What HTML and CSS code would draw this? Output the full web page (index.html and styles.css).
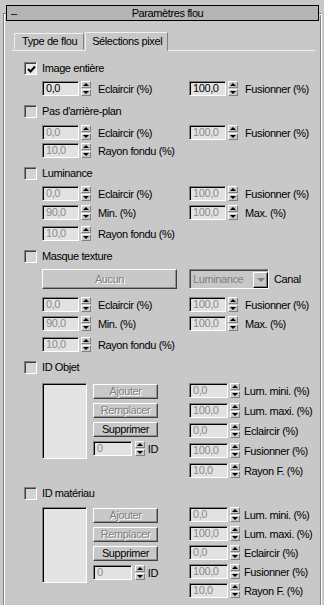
FILE: index.html
```html
<!DOCTYPE html>
<html lang="fr">
<head>
    <meta charset="UTF-8">
    <title>Paramètres flou</title>
    <link rel="stylesheet" href="styles.css">
</head>
<body>

    <div class="rollout">
        <div class="rollout-title">
            <span class="toggle">–</span>
            <span class="title">Paramètres flou</span>
        </div>

        <div class="tabs">
            <div class="tab">Type de flou</div>
            <div class="tab active">Sélections pixel</div>
        </div>

        <!-- Image entière -->
        <div class="section first">
            <label class="check"><span class="box checked"><svg width="9" height="9" viewBox="0 0 9 9"><path d="M1 4 L3.5 6.5 L8 1.5" fill="none" stroke="#000" stroke-width="2"/></svg></span>Image entière</label>
            <div class="fields">
                <div class="spin"><span class="edit">0,0</span><span class="arrows"><i class="up"></i><i class="down"></i></span><span class="lbl">Eclaircir (%)</span></div>
                <div class="spin"><span class="edit">100,0</span><span class="arrows"><i class="up"></i><i class="down"></i></span><span class="lbl">Fusionner (%)</span></div>
            </div>
        </div>

        <!-- Pas d'arrière-plan -->
        <div class="section">
            <label class="check"><span class="box"></span>Pas d'arrière-plan</label>
            <div class="fields tight">
                <div class="spin"><span class="edit off">0,0</span><span class="arrows"><i class="up"></i><i class="down"></i></span><span class="lbl">Eclaircir (%)</span></div>
                <div class="spin"><span class="edit off">100,0</span><span class="arrows"><i class="up"></i><i class="down"></i></span><span class="lbl">Fusionner (%)</span></div>
                <div class="spin"><span class="edit off">10,0</span><span class="arrows"><i class="up"></i><i class="down"></i></span><span class="lbl">Rayon fondu (%)</span></div>
            </div>
        </div>

        <!-- Luminance -->
        <div class="section">
            <label class="check"><span class="box"></span>Luminance</label>
            <div class="fields">
                <div class="spin"><span class="edit off">0,0</span><span class="arrows"><i class="up"></i><i class="down"></i></span><span class="lbl">Eclaircir (%)</span></div>
                <div class="spin"><span class="edit off">100,0</span><span class="arrows"><i class="up"></i><i class="down"></i></span><span class="lbl">Fusionner (%)</span></div>
                <div class="spin"><span class="edit off">90,0</span><span class="arrows"><i class="up"></i><i class="down"></i></span><span class="lbl">Min. (%)</span></div>
                <div class="spin"><span class="edit off">100,0</span><span class="arrows"><i class="up"></i><i class="down"></i></span><span class="lbl">Max. (%)</span></div>
                <div class="spin lower"><span class="edit off">10,0</span><span class="arrows"><i class="up"></i><i class="down"></i></span><span class="lbl">Rayon fondu (%)</span></div>
            </div>
        </div>

        <!-- Masque texture -->
        <div class="section">
            <label class="check"><span class="box"></span>Masque texture</label>
            <div class="map-row">
                <div class="btn big off">Aucun</div>
                <div class="combo"><span class="combo-text">Luminance</span><span class="combo-arrow"></span></div>
                <span class="lbl">Canal</span>
            </div>
            <div class="fields">
                <div class="spin"><span class="edit off">0,0</span><span class="arrows"><i class="up"></i><i class="down"></i></span><span class="lbl">Eclaircir (%)</span></div>
                <div class="spin"><span class="edit off">100,0</span><span class="arrows"><i class="up"></i><i class="down"></i></span><span class="lbl">Fusionner (%)</span></div>
                <div class="spin"><span class="edit off">90,0</span><span class="arrows"><i class="up"></i><i class="down"></i></span><span class="lbl">Min. (%)</span></div>
                <div class="spin"><span class="edit off">100,0</span><span class="arrows"><i class="up"></i><i class="down"></i></span><span class="lbl">Max. (%)</span></div>
                <div class="spin lower"><span class="edit off">10,0</span><span class="arrows"><i class="up"></i><i class="down"></i></span><span class="lbl">Rayon fondu (%)</span></div>
            </div>
        </div>

        <!-- ID Objet -->
        <div class="section">
            <label class="check"><span class="box"></span>ID Objet</label>
            <div class="id-block">
                <div class="listbox"></div>
                <div class="id-buttons">
                    <div class="btn off">Ajouter</div>
                    <div class="btn off">Remplacer</div>
                    <div class="btn">Supprimer</div>
                    <div class="spin"><span class="edit off wide">0</span><span class="arrows"><i class="up"></i><i class="down"></i></span><span class="lbl short">ID</span></div>
                </div>
                <div class="id-values">
                    <div class="spin"><span class="edit off">0,0</span><span class="arrows"><i class="up"></i><i class="down"></i></span><span class="lbl short">Lum. mini. (%)</span></div>
                    <div class="spin"><span class="edit off">100,0</span><span class="arrows"><i class="up"></i><i class="down"></i></span><span class="lbl short">Lum. maxi. (%)</span></div>
                    <div class="spin"><span class="edit off">0,0</span><span class="arrows"><i class="up"></i><i class="down"></i></span><span class="lbl short">Eclaircir (%)</span></div>
                    <div class="spin"><span class="edit off">100,0</span><span class="arrows"><i class="up"></i><i class="down"></i></span><span class="lbl short">Fusionner (%)</span></div>
                    <div class="spin"><span class="edit off">10,0</span><span class="arrows"><i class="up"></i><i class="down"></i></span><span class="lbl short">Rayon F. (%)</span></div>
                </div>
            </div>
        </div>

        <!-- ID matériau -->
        <div class="section">
            <label class="check"><span class="box"></span>ID matériau</label>
            <div class="id-block compact">
                <div class="listbox"></div>
                <div class="id-buttons">
                    <div class="btn off">Ajouter</div>
                    <div class="btn off">Remplacer</div>
                    <div class="btn">Supprimer</div>
                    <div class="spin"><span class="edit off wide">0</span><span class="arrows"><i class="up"></i><i class="down"></i></span><span class="lbl short">ID</span></div>
                </div>
                <div class="id-values">
                    <div class="spin"><span class="edit off">0,0</span><span class="arrows"><i class="up"></i><i class="down"></i></span><span class="lbl short">Lum. mini. (%)</span></div>
                    <div class="spin"><span class="edit off">100,0</span><span class="arrows"><i class="up"></i><i class="down"></i></span><span class="lbl short">Lum. maxi. (%)</span></div>
                    <div class="spin"><span class="edit off">0,0</span><span class="arrows"><i class="up"></i><i class="down"></i></span><span class="lbl short">Eclaircir (%)</span></div>
                    <div class="spin"><span class="edit off">100,0</span><span class="arrows"><i class="up"></i><i class="down"></i></span><span class="lbl short">Fusionner (%)</span></div>
                    <div class="spin"><span class="edit off">10,0</span><span class="arrows"><i class="up"></i><i class="down"></i></span><span class="lbl short">Rayon F. (%)</span></div>
                </div>
            </div>
        </div>
    </div>

</body>
</html>
```

FILE: styles.css
```css
body {
    margin: 0;
    width: 324px;
    height: 605px;
    overflow: hidden;
    background-color: #c8c8c8;
    font-family: "Liberation Sans", Arial, sans-serif;
    font-size: 11px;
    letter-spacing: -0.4px;
    color: #000;
}

/* rollout frame */
.rollout {
    margin: 13px 2px 0 3px;
    min-height: 620px;
    border: 1px solid;
    border-color: #808080 #fff transparent #808080;
    box-shadow: inset 1px 1px #fff, inset -1px 0 #808080;
}

.rollout-title {
    display: flex;
    align-items: center;
    height: 16px;
    box-sizing: border-box;
    margin: -9px 2px 0 2px;
    border: 1px solid #000;
    background-color: #b4b4b4;
}

.toggle {
    width: 6px;
    padding-left: 4px;
    line-height: 12px;
}

.title {
    flex: 1;
    text-align: center;
    line-height: 14px;
}

/* tabs */
.tabs {
    display: flex;
    align-items: flex-end;
    height: 19px;
    margin: 10px 6px 0 8px;
    border-bottom: 1px solid #f0f0f0;
}

.tab {
    height: 17px;
    box-sizing: border-box;
    padding: 0 6px 0 7px;
    border: 1px solid;
    border-color: #f0f0f0 #808080 transparent #f0f0f0;
    line-height: 15px;
}

.tab:first-child { margin-left: 2px; }

.tab.active {
    height: 19px;
    margin-bottom: -1px;
    margin-left: 1px;
    padding: 0 5px 0 6px;
    background-color: #c8c8c8;
    line-height: 17px;
}

/* sections */
.section {
    padding-left: 20px;
    margin-top: 9px;
}

.section.first { margin-top: 11px; }

.check {
    display: flex;
    align-items: center;
    height: 13px;
    line-height: 13px;
}

.box {
    width: 13px;
    height: 13px;
    box-sizing: border-box;
    margin-right: 5px;
    border: 1px solid;
    border-color: #808080 #fff #fff #808080;
    box-shadow: inset 1px 1px #404040;
    background-color: #d4d4d4;
    display: flex;
    align-items: center;
    justify-content: center;
}

.box.checked { background-color: #e8e8e8; }
.box svg { margin: 1px 0 0 1px; }

.fields {
    display: grid;
    grid-template-columns: 147px auto;
    row-gap: 4px;
    margin: 6px 0 0 18px;
}

.fields.tight { row-gap: 3px; margin-top: 7px; }

/* spinner */
.spin {
    display: flex;
    align-items: center;
    height: 15px;
}

.spin.lower { margin-top: 2px; }

.edit {
    width: 37px;
    height: 15px;
    box-sizing: border-box;
    padding-left: 3px;
    border: 1px solid;
    border-color: #808080 #fff #fff #808080;
    box-shadow: inset 1px 1px #000;
    background-color: #e2e2e2;
    line-height: 13px;
}

.edit.off { color: #8a8a8a; }
.edit.wide { width: 41px; }

.arrows {
    display: flex;
    flex-direction: column;
    justify-content: space-between;
    width: 10px;
    height: 15px;
    margin-left: 2px;
}

.arrows i {
    display: flex;
    align-items: center;
    justify-content: center;
    height: 7px;
    box-sizing: border-box;
    border: 1px solid;
    border-color: #fff #808080 #808080 #fff;
}

.arrows .up::after {
    content: "";
    border-left: 3px solid transparent;
    border-right: 3px solid transparent;
    border-bottom: 3px solid #000;
}

.arrows .down::after {
    content: "";
    border-left: 3px solid transparent;
    border-right: 3px solid transparent;
    border-top: 3px solid #000;
}

.lbl {
    margin-left: 7px;
    white-space: nowrap;
}

.lbl.short { margin-left: 4px; }

/* buttons */
.btn {
    height: 15px;
    box-sizing: border-box;
    border: 1px solid;
    border-color: #fff #404040 #404040 #fff;
    box-shadow: inset -1px -1px #909090;
    text-align: center;
    line-height: 13px;
}

.btn.off {
    color: #808080;
    text-shadow: 1px 1px #fff;
}

.btn.big {
    width: 135px;
    height: 20px;
    line-height: 18px;
}

/* texture map row */
.map-row {
    display: flex;
    align-items: center;
    margin: 6px 0 0 18px;
}

.combo {
    display: flex;
    align-items: center;
    width: 80px;
    height: 20px;
    box-sizing: border-box;
    margin-left: 12px;
    border: 1px solid;
    border-color: #808080 #fff #fff #808080;
    box-shadow: inset 1px 1px #404040;
}

.combo-text {
    flex: 1;
    padding-left: 3px;
    color: #808080;
}

.combo-arrow {
    display: flex;
    align-items: center;
    justify-content: center;
    width: 15px;
    height: 16px;
    box-sizing: border-box;
    margin: 1px 0 0 0;
    border: 1px solid;
    border-color: #fff #000 #000 #fff;
    box-shadow: inset -1px -1px #808080;
}

.combo-arrow::after {
    content: "";
    border-left: 4px solid transparent;
    border-right: 4px solid transparent;
    border-top: 4px solid #808080;
}

.map-row .lbl { margin-left: 5px; }

.map-row + .fields { margin-top: 8px; }

/* ID blocks */
.id-block {
    display: flex;
    margin: 9px 0 0 18px;
}

.id-block.compact { margin-top: 7px; }
.id-block.compact .id-values { gap: 4px; }

.listbox {
    width: 45px;
    height: 76px;
    box-sizing: border-box;
    border: 1px solid;
    border-color: #808080 #fff #fff #808080;
    box-shadow: inset 1px 1px #000;
    background-color: #e4e4e4;
}

.id-buttons {
    display: flex;
    flex-direction: column;
    gap: 4px;
    width: 65px;
    margin: 1px 0 0 6px;
}

.id-buttons .arrows { margin-left: 3px; }
.id-buttons .lbl.short { margin-left: 3px; }

.id-values {
    display: flex;
    flex-direction: column;
    gap: 5px;
    margin-left: 31px;
}

.id-values .edit { width: 39px; }
```
